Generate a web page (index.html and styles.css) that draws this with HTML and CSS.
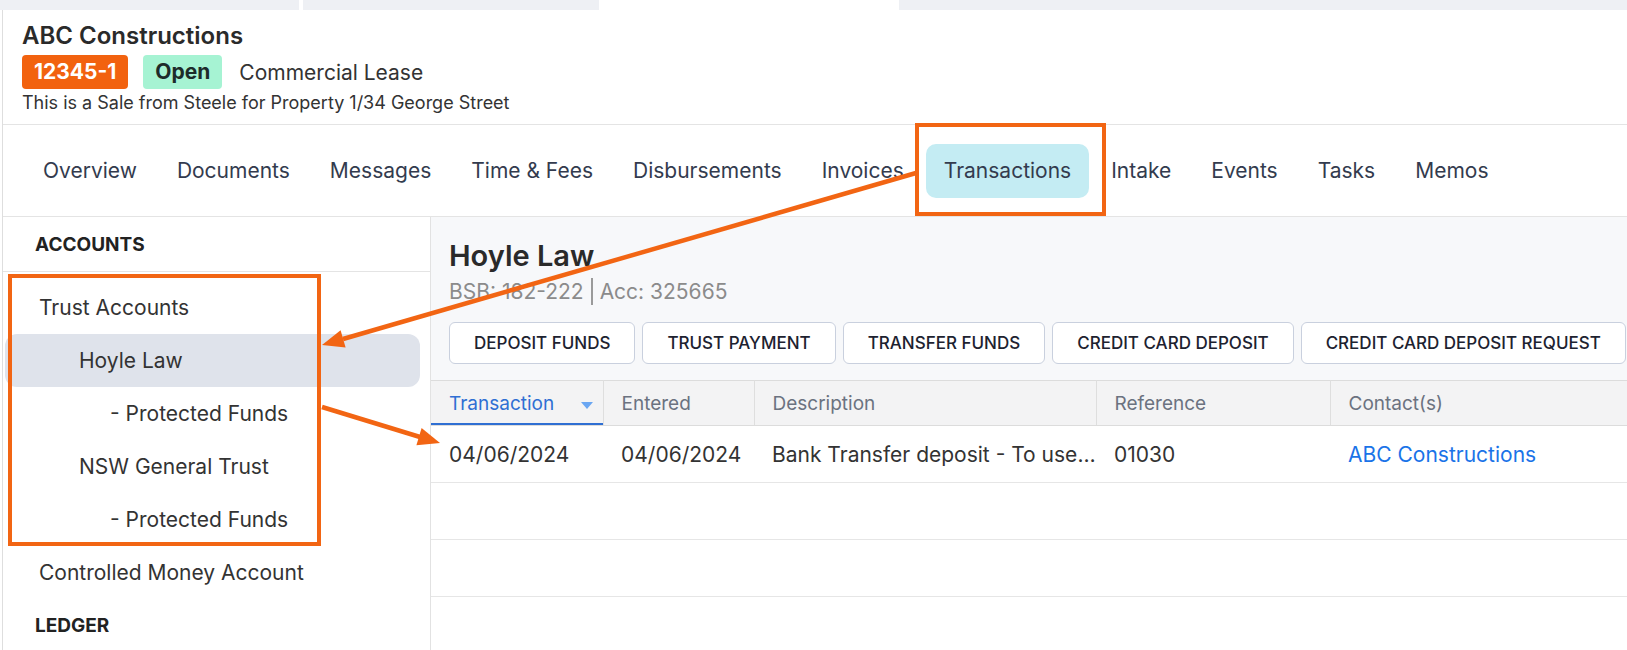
FILE: index.html
```html
<html>
<head>
  <meta charset="utf-8">
  <meta name="viewport" content="width=device-width, initial-scale=1.0">
  <title>ABC Constructions - Transactions</title>
  <link rel="stylesheet" href="styles.css">
</head>
<body>
  <div class="app">
    <div class="window-tabs">
      <div class="wt wt-1"></div>
      <div class="wt wt-gap"></div>
      <div class="wt wt-2"></div>
      <div class="wt wt-active"></div>
      <div class="wt wt-rest"></div>
    </div>

    <div class="frame">
      <header class="matter">
        <div class="matter-title">ABC Constructions</div>
        <div class="matter-tags">
          <span class="badge badge-number">12345-1</span>
          <span class="badge badge-open">Open</span>
          <span class="matter-type">Commercial Lease</span>
        </div>
        <div class="matter-desc">This is a Sale from Steele for Property 1/34 George Street</div>
      </header>

      <nav class="tabs">
        <a class="tab">Overview</a>
        <a class="tab">Documents</a>
        <a class="tab">Messages</a>
        <a class="tab">Time &amp; Fees</a>
        <a class="tab">Disbursements</a>
        <a class="tab">Invoices</a>
        <a class="tab active">Transactions</a>
        <a class="tab">Intake</a>
        <a class="tab">Events</a>
        <a class="tab">Tasks</a>
        <a class="tab">Memos</a>
      </nav>

      <div class="content">
        <aside class="sidebar">
          <div class="side-head">ACCOUNTS</div>
          <ul class="side-list">
            <li class="side-item lvl-0">Trust Accounts</li>
            <li class="side-item lvl-1 selected">Hoyle Law</li>
            <li class="side-item lvl-2">- Protected Funds</li>
            <li class="side-item lvl-1">NSW General Trust</li>
            <li class="side-item lvl-2">- Protected Funds</li>
            <li class="side-item lvl-0">Controlled Money Account</li>
            <li class="side-item side-group">LEDGER</li>
          </ul>
        </aside>

        <main class="account">
          <div class="account-head">
            <div class="account-name">Hoyle Law</div>
            <div class="account-meta">BSB: 182-222<span class="sep"></span>Acc: 325665</div>
            <div class="actions">
              <button class="btn">DEPOSIT FUNDS</button>
              <button class="btn">TRUST PAYMENT</button>
              <button class="btn">TRANSFER FUNDS</button>
              <button class="btn">CREDIT CARD DEPOSIT</button>
              <button class="btn">CREDIT CARD DEPOSIT REQUEST</button>
            </div>
          </div>

          <table class="grid">
            <colgroup>
              <col style="width: 172px">
              <col style="width: 151px">
              <col style="width: 342px">
              <col style="width: 234px">
              <col>
            </colgroup>
            <thead>
              <tr>
                <th class="sorted"><span class="th-in">Transaction<span class="sort-caret"></span></span></th>
                <th>Entered</th>
                <th>Description</th>
                <th>Reference</th>
                <th class="last">Contact(s)</th>
              </tr>
            </thead>
            <tbody>
              <tr>
                <td>04/06/2024</td>
                <td>04/06/2024</td>
                <td>Bank Transfer deposit - To use for settlement</td>
                <td>01030</td>
                <td><a class="link">ABC Constructions</a></td>
              </tr>
              <tr class="empty"><td></td><td></td><td></td><td></td><td></td></tr>
              <tr class="empty"><td></td><td></td><td></td><td></td><td></td></tr>
              <tr class="empty"><td></td><td></td><td></td><td></td><td></td></tr>
            </tbody>
          </table>
        </main>
      </div>
    </div>

    <!-- callouts drawn over the screenshot -->
    <svg class="callouts" width="1627" height="650" viewBox="0 0 1627 650">
      <rect x="917" y="125" width="187" height="89" fill="none" stroke="#f26513" stroke-width="4"/>
      <rect x="10" y="276" width="309" height="268" fill="none" stroke="#f26513" stroke-width="4"/>
      <line x1="916" y1="173" x2="343" y2="339" stroke="#f26513" stroke-width="4.5"/>
      <polygon points="322,345 345.6,347.5 340.6,330.3" fill="#f26513"/>
      <line x1="322" y1="407" x2="420" y2="437" stroke="#f26513" stroke-width="4.5"/>
      <polygon points="440,443 416.4,445.2 421.6,428" fill="#f26513"/>
    </svg>
  </div>
</body>
</html>
```

FILE: styles.css
```css
    body {
      margin: 0;
      font-family: Inter, "Liberation Sans", sans-serif;
      color: #333;
      background: #fff;
      overflow: hidden;
    }

    .app {
      position: relative;
      width: 1627px;
      height: 650px;
      overflow: hidden;
    }

    /* strip of browser/window tabs at the very top */
    .window-tabs {
      display: flex;
      height: 10px;
    }
    .wt      { background: #eef0f4; }
    .wt-1    { width: 299px; }
    .wt-gap  { width: 4px; background: #fff; }
    .wt-2    { width: 296px; }
    .wt-active { width: 300px; background: #fff; }
    .wt-rest { flex: 1; }

    .frame {
      margin-left: 2px;
      border-left: 1px solid #dedede;
      height: 640px;
      display: flex;
      flex-direction: column;
    }

    /* matter header */
    .matter {
      height: 115px;
      flex-shrink: 0;
      box-sizing: border-box;
      padding: 12px 0 0 19px;
      border-bottom: 1px solid #e4e4e4;
    }
    .matter-title {
      font-size: 24px;
      line-height: 28px;
      font-weight: 600;
      color: #2a2a2a;
    }
    .matter-tags {
      display: flex;
      align-items: center;
      gap: 15px;
      margin-top: 5px;
    }
    .badge {
      height: 34px;
      line-height: 34px;
      padding: 0 12px;
      border-radius: 4px;
      font-size: 21px;
      font-weight: 700;
    }
    .badge-number {
      background: #f2620f;
      color: #fff;
    }
    .badge-open {
      background: #a6f3d3;
      color: #1d2b2a;
    }
    .matter-type {
      margin-left: 2px;
      font-size: 21px;
      color: #333;
    }
    .matter-desc {
      margin-top: 3px;
      font-size: 18px;
      line-height: 22px;
      color: #333;
    }

    /* main tab row */
    .tabs {
      display: flex;
      flex-shrink: 0;
      align-items: center;
      gap: 4px;
      height: 91px;
      padding-left: 22px;
      border-bottom: 1px solid #e4e4e4;
    }
    .tab {
      height: 54px;
      line-height: 54px;
      padding: 0 18px;
      border-radius: 10px;
      font-size: 21px;
      color: #333b4e;
      white-space: nowrap;
    }
    .tab.active {
      background: #c4ecf3;
    }

    .content {
      flex: 1;
      display: flex;
      min-height: 0;
    }

    /* accounts sidebar */
    .sidebar {
      width: 427px;
      flex-shrink: 0;
      border-right: 1px solid #e2e2e2;
    }
    .side-head {
      height: 54px;
      display: flex;
      align-items: center;
      padding-left: 32px;
      border-bottom: 1px solid #e4e4e4;
      font-size: 19px;
      font-weight: 700;
      color: #222;
    }
    .side-list {
      list-style: none;
      margin: 0;
      padding: 9px 0 0 0;
    }
    .side-item {
      height: 53px;
      line-height: 53px;
      margin: 0 10px 0 2px;
      border-radius: 12px;
      font-size: 21px;
      color: #333;
      white-space: nowrap;
    }
    .side-item.lvl-0 { padding-left: 34px; }
    .side-item.lvl-1 { padding-left: 74px; }
    .side-item.lvl-2 { padding-left: 105px; }
    .side-item.selected { background: #dfe3eb; }
    .side-item.side-group {
      padding-left: 30px;
      font-size: 19px;
      font-weight: 700;
      color: #222;
    }

    /* account panel */
    .account {
      flex: 1;
      min-width: 0;
      overflow: hidden;
      background: #fff;
    }
    .account-head {
      background: #f7f8fa;
      padding: 22px 0 16px 18px;
    }
    .account-name {
      font-size: 29px;
      line-height: 34px;
      font-weight: 600;
      color: #2a2a2a;
    }
    .account-meta {
      margin-top: 5px;
      font-size: 21px;
      line-height: 24px;
      color: #8b8b8b;
      display: flex;
      align-items: center;
    }
    .account-meta .sep {
      display: inline-block;
      width: 2px;
      height: 27px;
      background: #9a9a9a;
      margin: 0 7px;
    }
    .actions {
      display: flex;
      gap: 7px;
      margin-top: 17px;
    }
    .btn {
      flex-shrink: 0;
      height: 42px;
      padding: 0 24px;
      background: #fff;
      border: 1px solid #c9d0de;
      border-radius: 6px;
      font-family: Inter, "Liberation Sans", sans-serif;
      font-size: 17px;
      font-weight: 500;
      color: #1d2230;
      white-space: nowrap;
    }

    /* transactions grid */
    .grid {
      width: 100%;
      table-layout: fixed;
      border-collapse: collapse;
      border-top: 1px solid #dcdcdc;
    }
    .grid th {
      height: 45px;
      padding: 0 18px;
      background: #f3f3f4;
      border-right: 1px solid #dedede;
      border-bottom: 1px solid #dcdcdc;
      text-align: left;
      font-size: 19px;
      font-weight: 400;
      color: #6b7280;
      white-space: nowrap;
    }
    .grid th.last { border-right: none; }
    .grid th.sorted {
      color: #2f6fd3;
      padding-right: 10px;
      box-shadow: inset 0 -2px 0 #2f6fd3;
    }
    .th-in {
      display: flex;
      align-items: center;
      justify-content: space-between;
    }
    .sort-caret {
      width: 0;
      height: 0;
      border-left: 6px solid transparent;
      border-right: 6px solid transparent;
      border-top: 7px solid #6aa6f2;
      margin-top: 4px;
    }
    .grid td {
      height: 57px;
      padding: 0 0 0 18px;
      border-bottom: 1px solid #e6e6e6;
      font-size: 21px;
      color: #333;
      white-space: nowrap;
      overflow: hidden;
      text-overflow: ellipsis;
    }
    .link {
      color: #1a73e8;
    }

    .callouts {
      position: absolute;
      left: 0;
      top: 0;
      pointer-events: none;
    }
```
